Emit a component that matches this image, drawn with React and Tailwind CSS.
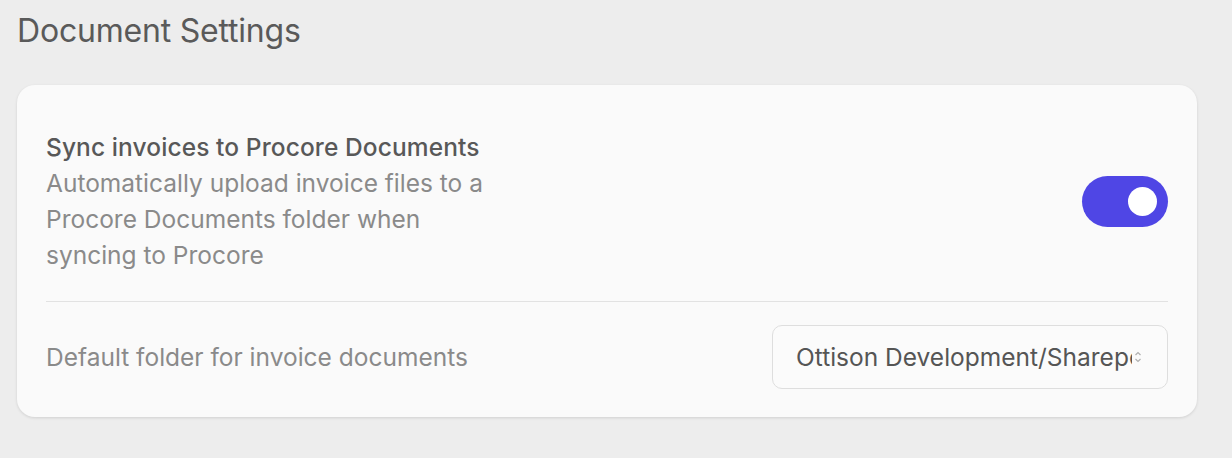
export default function App() {
  return (
    <div
      className="min-h-[458px] bg-[#ededed] px-[17px] pt-[11px] pb-8"
      style={{ fontFamily: 'Inter, "Noto Sans", sans-serif' }}
    >
      <h2 className="text-[32px] leading-[40px] font-normal text-[#5a5a5a] tracking-[-0.2px]">
        Document Settings
      </h2>

      <div className="mt-[34px] w-[1180px] rounded-[18px] bg-[#fafafa] px-[29px] pt-[44px] shadow-[0_1px_3px_rgba(0,0,0,0.12)]">
        {/* sync toggle row */}
        <div className="flex items-center justify-between pb-[28px]">
          <div className="w-[450px] text-[24.5px] leading-[36px]">
            <div className="font-medium text-[#585858] tracking-[0.1px]">Sync invoices to Procore Documents</div>
            <p className="text-[#8a8a8a]">
              Automatically upload invoice files to a Procore Documents folder when syncing to Procore
            </p>
          </div>
          <button className="flex h-[51px] w-[86px] items-center justify-end rounded-full bg-[#4f46e5] pr-[11px]">
            <span className="h-[29px] w-[29px] rounded-full bg-white" />
          </button>
        </div>

        <div className="h-px bg-[#e2e2e2]" />

        {/* default folder row */}
        <div className="flex items-center justify-between pt-[23px] pb-[28px]">
          <span className="text-[24.5px] text-[#8a8a8a]">Default folder for invoice documents</span>
          <div className="flex h-[64px] w-[396px] items-center rounded-[10px] border border-[#dedede] bg-[#fbfbfb] pl-[23px] pr-[25px]">
            <span className="flex-1 overflow-hidden whitespace-nowrap text-[24.5px] text-[#555]">
              Ottison Development/Sharepoint
            </span>
            <svg width="8" height="12" viewBox="0 0 8 12" className="ml-[2px] shrink-0" fill="none" stroke="#b0b0b0" strokeWidth="1.2">
              <path d="M1.5 4 L4 1.5 L6.5 4" />
              <path d="M1.5 8 L4 10.5 L6.5 8" />
            </svg>
          </div>
        </div>
      </div>
    </div>
  );
}
